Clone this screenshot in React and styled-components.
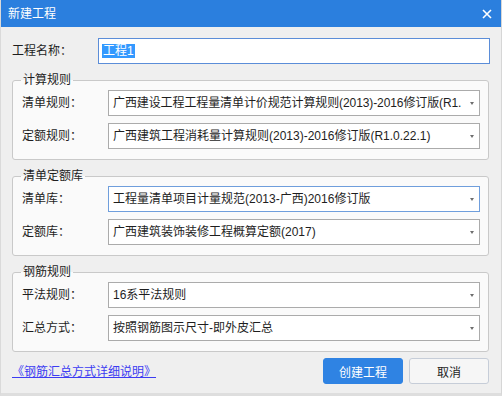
import React from 'react';
import styled, { createGlobalStyle } from 'styled-components';

const GlobalStyle = createGlobalStyle`
  html, body {
    margin: 0;
    padding: 0;
    background: #efefef;
  }
  * {
    box-sizing: border-box;
  }
`;

const Window = styled.div`
  width: 502px;
  height: 396px;
  display: flex;
  flex-direction: column;
  background: #efefef;
  border-left: 1px solid #dadada;
  border-right: 1px solid #d6d6d6;
  border-bottom: 3px solid #dedede;
  font-family: "Liberation Sans", "Noto Sans CJK SC", sans-serif;
  font-size: 12px;
  color: #1e1e1e;
  overflow: hidden;
`;

const TitleBar = styled.div`
  height: 27px;
  flex: 0 0 27px;
  margin: 0 -1px;
  background: #2b7fde;
  display: flex;
  align-items: center;
  justify-content: space-between;
  padding: 0 9px 0 8px;
`;

const Title = styled.span`
  color: #ffffff;
  font-size: 12px;
  line-height: 16px;
`;

const CloseButton = styled.button`
  width: 12px;
  height: 12px;
  padding: 0;
  border: none;
  background: transparent;
  display: flex;
  align-items: center;
  justify-content: center;
  cursor: pointer;
`;

const Body = styled.div`
  flex: 1;
  display: flex;
  flex-direction: column;
  padding: 11px 11px 0 11px;
`;

const NameRow = styled.div`
  display: flex;
  align-items: center;
`;

const NameLabel = styled.label`
  width: 86px;
  flex: 0 0 86px;
  line-height: 16px;
`;

const NameInput = styled.div`
  flex: 1;
  height: 26px;
  border: 1px solid #5b8dd8;
  background: #ffffff;
  display: flex;
  align-items: center;
  padding-left: 3px;
`;

const Selected = styled.span`
  background: #3399ff;
  color: #ffffff;
  line-height: 14px;
  padding: 0 1px;
`;

const Group = styled.div`
  position: relative;
  margin-top: 16px;
  border: 1px solid #c9c9c9;
  border-radius: 3px;
  background: #fafafa;
  padding: 9px 8px 10px 9px;
  margin-right: 1px;
`;

const Legend = styled.span`
  position: absolute;
  top: -9px;
  left: 8px;
  padding: 0 2px;
  line-height: 16px;
  background: linear-gradient(#efefef 50%, #fafafa 50%);
`;

const Row = styled.div`
  display: flex;
  align-items: center;
  & + & {
    margin-top: 7px;
  }
`;

const RowLabel = styled.label`
  width: 86px;
  flex: 0 0 86px;
  line-height: 16px;
`;

const Combo = styled.div`
  flex: 1;
  min-width: 0;
  height: 26px;
  border: 1px solid ${p => (p.$focused ? '#6f9edc' : '#ababab')};
  background: #ffffff;
  display: flex;
  align-items: center;
  padding: 0 4px 0 4px;
`;

const ComboText = styled.span`
  flex: 1;
  min-width: 0;
  white-space: nowrap;
  overflow: hidden;
  line-height: 16px;
  letter-spacing: ${p => (p.$tight ? '-0.1px' : 'normal')};
`;

const Arrow = styled.span`
  flex: 0 0 auto;
  width: 0;
  height: 0;
  margin: 0 1px 0 3px;
  border-left: 2.5px solid transparent;
  border-right: 2.5px solid transparent;
  border-top: 3px solid #6e6e6e;
`;

const Footer = styled.div`
  margin-top: 6px;
  display: flex;
  align-items: center;
  justify-content: space-between;
  padding-right: 1px;
`;

const HelpLink = styled.a`
  color: #3c3cf2;
  text-decoration: underline;
  line-height: 16px;
  cursor: pointer;
  margin-top: 2px;
`;

const Buttons = styled.div`
  display: flex;
  gap: 6px;
`;

const Button = styled.button`
  width: 80px;
  height: 26px;
  border-radius: 3px;
  font-family: inherit;
  font-size: 12px;
  cursor: pointer;
  border: 1px solid ${p => (p.$primary ? '#2f83e3' : '#c6cdd8')};
  background: ${p => (p.$primary ? '#2f83e3' : '#f6f6f6')};
  color: ${p => (p.$primary ? '#ffffff' : '#1e1e1e')};
`;

const groups = [
  {
    title: '计算规则',
    rows: [
      { label: '清单规则：', value: '广西建设工程工程量清单计价规范计算规则(2013)-2016修订版(R1.', tight: true },
      { label: '定额规则：', value: '广西建筑工程消耗量计算规则(2013)-2016修订版(R1.0.22.1)' },
    ],
  },
  {
    title: '清单定额库',
    rows: [
      { label: '清单库：', value: '工程量清单项目计量规范(2013-广西)2016修订版', focused: true },
      { label: '定额库：', value: '广西建筑装饰装修工程概算定额(2017)' },
    ],
  },
  {
    title: '钢筋规则',
    rows: [
      { label: '平法规则：', value: '16系平法规则' },
      { label: '汇总方式：', value: '按照钢筋图示尺寸-即外皮汇总' },
    ],
  },
];

const App = () => {
  return (
    <>
      <GlobalStyle />
      <Window>
        <TitleBar>
          <Title>新建工程</Title>
          <CloseButton aria-label="关闭">
            <svg width="10" height="10" viewBox="0 0 10 10">
              <path d="M1 1 L9 9 M9 1 L1 9" stroke="#ffffff" strokeWidth="1.6" />
            </svg>
          </CloseButton>
        </TitleBar>
        <Body>
          <NameRow>
            <NameLabel>工程名称：</NameLabel>
            <NameInput>
              <Selected>工程1</Selected>
            </NameInput>
          </NameRow>

          {groups.map(group => (
            <Group key={group.title}>
              <Legend>{group.title}</Legend>
              {group.rows.map(row => (
                <Row key={row.label}>
                  <RowLabel>{row.label}</RowLabel>
                  <Combo $focused={row.focused}>
                    <ComboText $tight={row.tight}>{row.value}</ComboText>
                    <Arrow />
                  </Combo>
                </Row>
              ))}
            </Group>
          ))}

          <Footer>
            <HelpLink>《钢筋汇总方式详细说明》</HelpLink>
            <Buttons>
              <Button $primary>创建工程</Button>
              <Button>取消</Button>
            </Buttons>
          </Footer>
        </Body>
      </Window>
    </>
  );
};

export default App;
